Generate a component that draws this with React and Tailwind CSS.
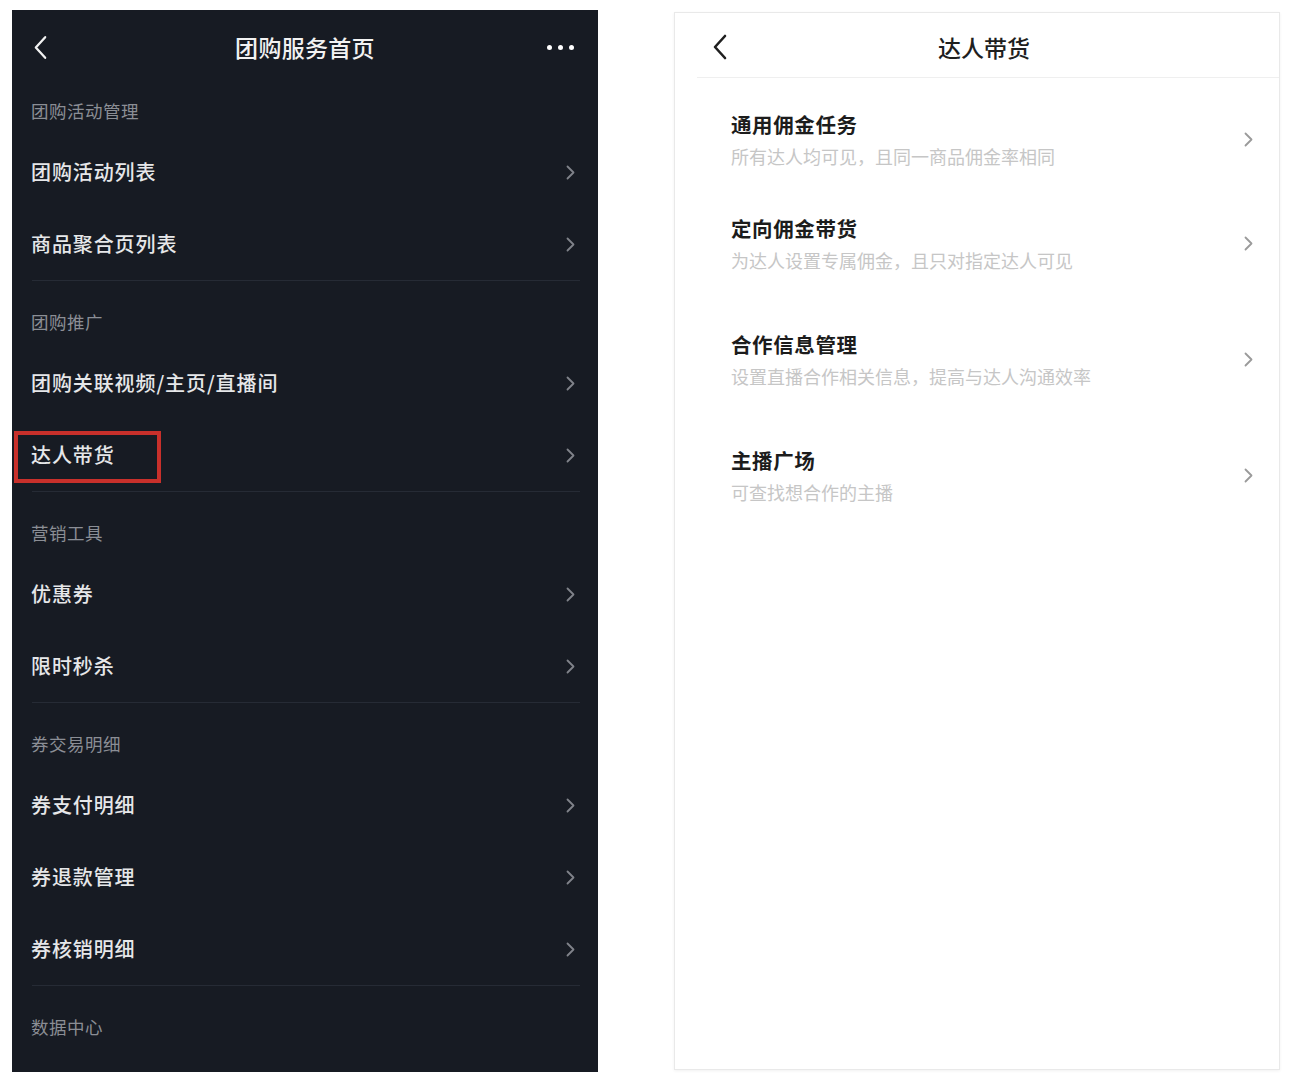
import React from 'react';

const FONT = { fontFamily: '"Noto Sans CJK SC", "Noto Sans", sans-serif' };

const groups = [
    { label: '团购活动管理', items: ['团购活动列表', '商品聚合页列表'] },
    { label: '团购推广', items: ['团购关联视频/主页/直播间', '达人带货'] },
    { label: '营销工具', items: ['优惠券', '限时秒杀'] },
    { label: '券交易明细', items: ['券支付明细', '券退款管理', '券核销明细'] },
    { label: '数据中心', items: [] },
];

const tasks = [
    { title: '通用佣金任务', desc: '所有达人均可见，且同一商品佣金率相同' },
    { title: '定向佣金带货', desc: '为达人设置专属佣金，且只对指定达人可见' },
    { title: '合作信息管理', desc: '设置直播合作相关信息，提高与达人沟通效率' },
    { title: '主播广场', desc: '可查找想合作的主播' },
];

const Chevron = ({ className }) => (
    <svg viewBox="0 0 9 15" className={className} fill="none" stroke="currentColor" strokeWidth="1.8" strokeLinecap="round" strokeLinejoin="round">
        <polyline points="1.5,1.5 7.5,7.5 1.5,13.5" />
    </svg>
);

const BackIcon = ({ className, width = 2.4 }) => (
    <svg viewBox="0 0 16 26" className={className} fill="none" stroke="currentColor" strokeWidth={width} strokeLinecap="round" strokeLinejoin="round">
        <polyline points="13,2 3,13 13,24" />
    </svg>
);

const DarkPanel = () => (
    <div className="mt-[10px] ml-[12px] w-[586px] h-[1062px] bg-[#171b23] overflow-hidden">
        {/* header */}
        <div className="h-[74px] flex items-center">
            <div className="w-[100px] pl-[21px] text-[#f2f2f2]">
                <BackIcon className="w-[15px] h-[25px]" />
            </div>
            <div className="flex-1 text-center text-[23px] leading-[30px] font-medium text-[#f2f2f2] tracking-[0.3px]">团购服务首页</div>
            <div className="w-[100px] pr-[24px] flex justify-end gap-[6px]">
                <span className="w-[5px] h-[5px] rounded-full bg-white" />
                <span className="w-[5px] h-[5px] rounded-full bg-white" />
                <span className="w-[5px] h-[5px] rounded-full bg-white" />
            </div>
        </div>

        {groups.map((g, gi) => (
            <div key={g.label}>
                {gi > 0 && <div className="ml-[20px] mr-[18px] h-px bg-[#262b35]" />}
                <div className={`${gi === 0 ? 'pt-[17px]' : 'pt-[31px]'} pb-[15px] pl-[19px] text-[17.5px] leading-[20px] tracking-[0.5px] text-[#8b8e95]`}>
                    {g.label}
                </div>
                {g.items.map((item) => (
                    <div key={item} className="relative h-[72px] flex items-center justify-between pl-[19px] pr-[23px]">
                        <span className="text-[20px] tracking-[0.9px] font-medium text-[#e6e7e9]">{item}</span>
                        <Chevron className="w-[9px] h-[15px] text-[#80838a]" />
                        {item === '达人带货' && (
                            <div className="absolute left-[2px] top-[12px] w-[147px] h-[52px] border-[4px] border-[#c8302b]" />
                        )}
                    </div>
                ))}
            </div>
        ))}
    </div>
);

const LightPanel = () => (
    <div className="mt-[12px] ml-[76px] w-[606px] h-[1058px] bg-white border border-[#e9e9e9] shadow-[0_1px_3px_rgba(0,0,0,0.06)]">
        {/* header */}
        <div className="h-[64px] flex items-center pt-[3px]">
            <div className="w-[100px] pl-[37px] text-[#1f1f1f]">
                <BackIcon className="w-[16px] h-[26px]" width={2.6} />
            </div>
            <div className="flex-1 text-center text-[23px] leading-[30px] font-medium text-[#1f1f1f]">达人带货</div>
            <div className="w-[86px]" />
        </div>
        <div className="ml-[22px] h-px bg-[#efefef]" />

        {tasks.map((t, i) => (
            <div key={t.title} className={`${i === 0 ? 'h-[104px]' : 'h-[116px]'} pt-[33px]`}>
                <div className="flex items-center justify-between pl-[56px] pr-[26px]">
                    <div>
                        <div className="text-[20.5px] leading-[26px] tracking-[0.6px] font-bold text-[#1c1c1c]">{t.title}</div>
                        <div className="mt-[8px] text-[18px] leading-[22px] text-[#c6c6c6]">{t.desc}</div>
                    </div>
                    <Chevron className="w-[9px] h-[15px] text-[#9a9a9a]" />
                </div>
            </div>
        ))}
    </div>
);

export default function App() {
    return (
        <div className="w-[1296px] h-[1084px] bg-white flex items-start overflow-hidden" style={FONT}>
            <DarkPanel />
            <LightPanel />
        </div>
    );
}
